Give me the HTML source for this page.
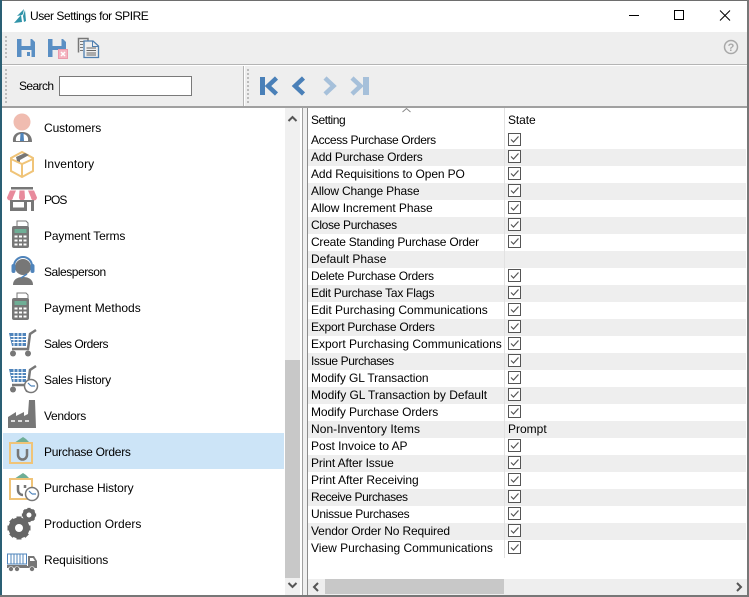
<!DOCTYPE html>
<html><head><meta charset="utf-8"><style>
html,body{margin:0;padding:0;background:#fff}
#w{position:relative;width:749px;height:597px;overflow:hidden;background:#fff;font:12px "Liberation Sans",sans-serif;color:#000}
#w div,#w svg{position:absolute}
.t{white-space:nowrap;line-height:17px}
.r{left:308px;width:438px;height:17px}
.g{background:#eee}
.grip{width:2px;background:repeating-linear-gradient(#bcbcbc 0 2px,transparent 2px 4px)}
</style></head><body><div id="w">
<div style="left:0;top:0;width:749px;height:1px;background:#6e6e6e"></div>
<div style="left:0;top:0;width:2px;height:597px;background:#2a5f74"></div>
<div style="left:747px;top:0;width:2px;height:597px;background:#777"></div>
<div style="left:0;top:595px;width:749px;height:2px;background:#777"></div>

<svg style="left:13px;top:7px" width="16" height="17" viewBox="0 0 16 17"><path d="M1 16L8 8 9 15ZM4 9L11 2 10 7 9 8ZM10 9L12 3 13 14 11 15Z" fill="#2f93a8"/></svg>
<div class="t" style="left:30px;top:8px;letter-spacing:-.45px">User Settings for SPIRE</div>
<svg style="left:625px;top:6px" width="120" height="20" viewBox="0 0 120 20" fill="none" stroke="#000"><path d="M4 9.500H14"/><rect x="49.500" y="4.500" width="9" height="9"/><path d="M95 4.500L105 14.500M105 4.500L95 14.500"/></svg>

<div style="left:2px;top:32px;width:745px;height:32px;background:#eee"></div>
<div style="left:2px;top:64px;width:745px;height:1px;background:#b4b4b4"></div>
<div style="left:2px;top:65px;width:745px;height:1px;background:#fff"></div>
<div style="left:2px;top:66px;width:745px;height:40px;background:#eee"></div>
<div style="left:2px;top:106px;width:745px;height:2px;background:#a0a0a0"></div>
<div class="grip" style="left:5px;top:36px;height:24px"></div>
<div class="grip" style="left:5px;top:69px;height:34px"></div>
<div style="left:243px;top:66px;width:1px;height:40px;background:#b4b4b4"></div>
<div style="left:244px;top:66px;width:1px;height:40px;background:#fff"></div>
<div class="grip" style="left:247px;top:69px;height:34px"></div>

<svg style="left:16px;top:38px" width="21" height="20" viewBox="0 0 21 20"><path d="M1 1H16L19 4V19H1Z" fill="#5a8fc4"/><rect x="5.500" y="1" width="9" height="7" fill="#eee"/><rect x="5.500" y="12" width="10" height="7" fill="#eee"/><rect x="11" y="14" width="3" height="4" fill="#5a8fc4"/></svg>
<svg style="left:47px;top:38px" width="22" height="22" viewBox="0 0 22 22"><path d="M1 1H16L19 4V19H1Z" fill="#5a8fc4"/><rect x="5.500" y="1" width="9" height="7" fill="#eee"/><rect x="5.500" y="12" width="6" height="7" fill="#eee"/><rect x="11.500" y="11.500" width="9" height="9" fill="#f4b4c0" stroke="#ec9aac"/><path d="M14 14L18 18M18 14L14 18" stroke="#fff" stroke-width="1.500"/></svg>
<svg style="left:77px;top:37px" width="23" height="22" viewBox="0 0 23 22" fill="none"><path d="M1.500 15.500V1.500H11V5" stroke="#777" stroke-width="1.500" fill="#eee"/><path d="M3 4.500H8M3 7.500H6M3 10.500H6M3 13.500H6" stroke="#777"/><path d="M7 4H16L21.500 9V20.500H7Z" fill="#eee" stroke="#4f7fb0" stroke-width="1.300"/><path d="M15.500 4V9.500H21" stroke="#4f7fb0"/><path d="M9.500 11H19M9.500 13.500H19M9.500 16H19M9.500 18H19" stroke="#666"/></svg>
<svg style="left:723px;top:39px" width="16" height="16" viewBox="0 0 16 16"><circle cx="8" cy="8" r="6.500" fill="none" stroke="#a8a8a8" stroke-width="1.500"/><text x="8" y="12" font-family="Liberation Sans" font-size="11" font-weight="bold" fill="#a8a8a8" text-anchor="middle">?</text></svg>

<div class="t" style="left:19px;top:78px;letter-spacing:-.6px">Search</div>
<div style="left:59px;top:76px;width:131px;height:18px;background:#fff;border:1px solid #7a7a7a"></div>

<svg style="left:258px;top:74px" width="115" height="24" viewBox="0 0 115 24"><path d="M2 3H7V21H2Z" fill="#4a80b8"/><path d="M18.500 4L10 12 18.500 20" fill="none" stroke="#4a80b8" stroke-width="4.500"/><path d="M45.500 4L37 12 45.500 20" fill="none" stroke="#4a80b8" stroke-width="4.500"/><path d="M67 4L75.500 12 67 20" fill="none" stroke="#a6c0da" stroke-width="4.500"/><path d="M94 4L102.500 12 94 20" fill="none" stroke="#a6c0da" stroke-width="4.500"/><path d="M105 3H111V21H105Z" fill="#a6c0da"/></svg>

<!-- left list -->
<div style="left:3px;top:433px;width:281px;height:36px;background:#cce4f7"></div>
<div class="t" style="left:44px;top:120px;letter-spacing:-.1px">Customers</div>
<div class="t" style="left:44px;top:156px;letter-spacing:.1px">Inventory</div>
<div class="t" style="left:44px;top:192px;letter-spacing:-1px">POS</div>
<div class="t" style="left:44px;top:228px;letter-spacing:-.15px">Payment Terms</div>
<div class="t" style="left:44px;top:264px;letter-spacing:-.45px">Salesperson</div>
<div class="t" style="left:44px;top:300px">Payment Methods</div>
<div class="t" style="left:44px;top:336px;letter-spacing:-.5px">Sales Orders</div>
<div class="t" style="left:44px;top:372px;letter-spacing:-.3px">Sales History</div>
<div class="t" style="left:44px;top:408px;letter-spacing:-.3px">Vendors</div>
<div class="t" style="left:44px;top:444px;letter-spacing:-.27px">Purchase Orders</div>
<div class="t" style="left:44px;top:480px;letter-spacing:-.12px">Purchase History</div>
<div class="t" style="left:44px;top:516px">Production Orders</div>
<div class="t" style="left:44px;top:552px;letter-spacing:-.1px">Requisitions</div>

<svg style="left:0;top:108px" width="40" height="480" viewBox="0 108 40 480">
<defs>
<g id="calc"><path d="M6 7V1H15L17 3V7Z" fill="#fff" stroke="#777"/><rect x="1" y="6" width="17" height="22" rx="2" fill="#777"/><rect x="3.500" y="9" width="12" height="4" fill="#6fae96"/><path d="M3.500 15.500h3v2h-3zM8 15.500h3v2H8zM12.500 15.500h3v2h-3zM3.500 19.500h3v2h-3zM8 19.500h3v2H8zM12.500 19.500h3v2h-3zM3.500 23.500h3v2h-3zM8 23.500h3v2H8zM12.500 23.500h3v2h-3z" fill="#fff"/></g>
<g id="cart"><path d="M1 4H18V17H4Z" fill="#4f84bb"/><path d="M2.500 7.500H18M3 10.500H18M4 13.500H18M6 4V17M10 4V17M14 4V17" stroke="#fff"/><path d="M4 20H20L22 5 28 1" fill="none" stroke="#777" stroke-width="2.500"/><circle cx="5" cy="24.500" r="3" fill="#777"/><circle cx="20" cy="24.500" r="3" fill="#777"/></g>
<g id="clock"><circle cx="0" cy="0" r="6.500" fill="#fff" stroke="#777" stroke-width="1.500"/><path d="M0 0L-3 -3M0 0L4 0" stroke="#4f84bb" stroke-width="1.200"/></g>
<g id="bag"><path d="M5 6L14 0 17 2 21 6Z" fill="#6fae96"/><path d="M1 6H23V26H1Z" fill="none" stroke="#f0c478" stroke-width="2"/></g>
<g id="gear"><circle r="7.500" fill="none" stroke="#666" stroke-width="6"/><path d="M-2.500 -11.500H2.500V11.500H-2.500ZM-11.500 -2.500H11.500V2.500H-11.500Z" fill="#666"/><path d="M-2.500 -11.500H2.500V11.500H-2.500ZM-11.500 -2.500H11.500V2.500H-11.500Z" fill="#666" transform="rotate(45)"/><circle r="4" fill="#fff"/></g>
</defs>
<!-- customers -->
<g transform="translate(12,113)"><circle cx="10" cy="9" r="8.500" fill="#f0bcb0"/><path d="M1 29C0 20 7 19 10 19S20 20 20 29Z" fill="#777"/><path d="M4 28C3 23 7 21 9 21V28ZM16 28C17 23 13 21 11 21V28Z" fill="#fff"/><path d="M8.500 20H11.500L12 28H8Z" fill="#4f84bb"/></g>
<!-- inventory -->
<g transform="translate(10,151)"><path d="M12 1L23 7V20L12 26 1 20V7Z" fill="#fff" stroke="#f0c478" stroke-width="2"/><path d="M1 8L12 13 23 8M12 13V26" fill="none" stroke="#f0c478" stroke-width="2"/><path d="M6 6L15 2 19 4 10 9V11L7 10Z" fill="#777"/></g>
<!-- POS -->
<g transform="translate(7,187)"><rect x="4" y="0" width="22" height="2.500" fill="#777"/><path d="M3 3.500H9L6 10.500A3 3 0 0 1 0 10.500ZM12.500 3.500H17.500L18 10.500A3 3 0 0 1 12 10.500ZM21 3.500H27L30 10.500A3 3 0 0 1 24 10.500Z" fill="#e88a9c"/><path d="M3 13H27V24H3Z" fill="#777"/><rect x="6" y="15" width="11" height="5.500" fill="#fff"/><rect x="20" y="15" width="4" height="9" fill="#fff"/></g>
<use href="#calc" transform="translate(11,220)"/>
<!-- salesperson -->
<g transform="translate(11,257)"><circle cx="12" cy="10" r="8" fill="#777"/><path d="M3 12V9A9 9 0 0 1 21 9V12" fill="none" stroke="#4f84bb" stroke-width="2"/><rect x="0.500" y="7" width="4" height="9" rx="2" fill="#4f84bb"/><rect x="19.500" y="7" width="4" height="9" rx="2" fill="#4f84bb"/><path d="M2 28C2 22 7 20 12 20S22 22 22 28Z" fill="#777"/><path d="M10 21L16 17" stroke="#4f84bb" stroke-width="1.500"/></g>
<use href="#calc" transform="translate(11,292)"/>
<use href="#cart" transform="translate(8,329)"/>
<use href="#cart" transform="translate(8,365)"/>
<use href="#clock" transform="translate(31,386)"/>
<!-- vendors -->
<path d="M8 428V417L16 412V416L24 412V416L28 414 29 400H35L36 428Z" fill="#777"/><path d="M11 421H15M18 421H22M25 421H29" stroke="#fff" stroke-width="1.500"/>
<!-- purchase orders -->
<use href="#bag" transform="translate(9,437)"/>
<path d="M18 449V455A4.500 4.500 0 0 0 27 455V449" fill="none" stroke="#777" stroke-width="2.500"/>
<!-- purchase history -->
<use href="#bag" transform="translate(9,473)"/>
<path d="M18 485V490A5 5 0 0 0 23 495M25 485V488" fill="none" stroke="#777" stroke-width="2.500"/>
<use href="#clock" transform="translate(32,494)"/>
<!-- production -->
<use href="#gear" transform="translate(19,528)"/>
<use href="#gear" transform="translate(29,515) scale(.62)"/>
<!-- requisitions -->
<g transform="translate(7,553)"><rect x=".5" y="1" width="19" height="10" fill="#fff" stroke="#4f84bb"/><path d="M4 1V11M7 1V11M10 1V11M13 1V11M16 1V11" stroke="#4f84bb"/><path d="M0 12H20V13H0Z" fill="#777"/><path d="M21 3H27L30 8V15H0V13H21Z" fill="#777"/><path d="M23 5H26L28 8H23Z" fill="#fff"/><circle cx="4" cy="16" r="2.500" fill="#777" stroke="#fff" stroke-width=".6"/><circle cx="10" cy="16" r="2.500" fill="#777" stroke="#fff" stroke-width=".6"/><circle cx="25" cy="16" r="2.500" fill="#777" stroke="#fff" stroke-width=".6"/></g>
</svg>

<!-- left scrollbar -->
<div style="left:285px;top:108px;width:15px;height:487px;background:#f0f0f0"></div>
<div style="left:285px;top:360px;width:15px;height:218px;background:#c8c8c8"></div>
<svg style="left:285px;top:110px" width="15" height="485" viewBox="0 0 15 485" fill="none" stroke="#555" stroke-width="2"><path d="M3.500 11L7.500 7 11.500 11M3.500 473L7.500 477 11.500 473"/></svg>

<!-- splitter -->
<div style="left:300px;top:108px;width:2px;height:487px;background:#fff"></div>
<div style="left:302px;top:108px;width:1px;height:487px;background:#a0a0a0"></div>
<div style="left:303px;top:108px;width:4px;height:487px;background:#f0f0f0"></div>
<div style="left:307px;top:108px;width:1px;height:487px;background:#8c8c8c"></div>

<!-- grid -->
<svg style="left:401px;top:107px" width="11" height="6" viewBox="0 0 11 6" fill="none" stroke="#888"><path d="M1.500 5L5.500 1.500 9.500 5"/></svg>
<div class="r g" style="top:149px"></div><div class="r g" style="top:183px"></div><div class="r g" style="top:217px"></div><div class="r g" style="top:251px"></div><div class="r g" style="top:285px"></div><div class="r g" style="top:319px"></div><div class="r g" style="top:353px"></div><div class="r g" style="top:387px"></div><div class="r g" style="top:421px"></div><div class="r g" style="top:455px"></div><div class="r g" style="top:489px"></div><div class="r g" style="top:523px"></div>
<div style="left:504px;top:108px;width:1px;height:450px;background:#e2e2e2"></div>
<div class="t" style="left:311px;top:112px;letter-spacing:-.45px">Setting</div>
<div class="t" style="left:508px;top:112px;letter-spacing:-.1px">State</div>
<div class="t" style="left:311px;top:132px;letter-spacing:-.36px">Access Purchase Orders</div>
<div class="t" style="left:311px;top:149px;letter-spacing:-.2px">Add Purchase Orders</div>
<div class="t" style="left:311px;top:166px;letter-spacing:-.11px">Add Requisitions to Open PO</div>
<div class="t" style="left:311px;top:183px;letter-spacing:-.17px">Allow Change Phase</div>
<div class="t" style="left:311px;top:200px;letter-spacing:-.05px">Allow Increment Phase</div>
<div class="t" style="left:311px;top:217px;letter-spacing:-.33px">Close Purchases</div>
<div class="t" style="left:311px;top:234px;letter-spacing:-.23px">Create Standing Purchase Order</div>
<div class="t" style="left:311px;top:251px">Default Phase</div>
<div class="t" style="left:311px;top:268px;letter-spacing:-.27px">Delete Purchase Orders</div>
<div class="t" style="left:311px;top:285px;letter-spacing:-.26px">Edit Purchase Tax Flags</div>
<div class="t" style="left:311px;top:302px">Edit Purchasing Communications</div>
<div class="t" style="left:311px;top:319px;letter-spacing:-.23px">Export Purchase Orders</div>
<div class="t" style="left:311px;top:336px">Export Purchasing Communications</div>
<div class="t" style="left:311px;top:353px;letter-spacing:-.4px">Issue Purchases</div>
<div class="t" style="left:311px;top:370px;letter-spacing:-.1px">Modify GL Transaction</div>
<div class="t" style="left:311px;top:387px;letter-spacing:-.03px">Modify GL Transaction by Default</div>
<div class="t" style="left:311px;top:404px;letter-spacing:-.1px">Modify Purchase Orders</div>
<div class="t" style="left:311px;top:421px;letter-spacing:.05px">Non-Inventory Items</div>
<div class="t" style="left:508px;top:421px">Prompt</div>
<div class="t" style="left:311px;top:438px;letter-spacing:-.05px">Post Invoice to AP</div>
<div class="t" style="left:311px;top:455px;letter-spacing:-.12px">Print After Issue</div>
<div class="t" style="left:311px;top:472px;letter-spacing:-.05px">Print After Receiving</div>
<div class="t" style="left:311px;top:489px;letter-spacing:-.4px">Receive Purchases</div>
<div class="t" style="left:311px;top:506px;letter-spacing:-.3px">Unissue Purchases</div>
<div class="t" style="left:311px;top:523px;letter-spacing:-.16px">Vendor Order No Required</div>
<div class="t" style="left:311px;top:540px">View Purchasing Communications</div>

<svg style="left:508px;top:132px" width="14" height="425" viewBox="0 0 14 425">
<defs><g id="c"><rect x=".5" y="1.500" width="12" height="12" fill="#fff" stroke="#555"/><path d="M3 7.500L5.500 10 10.500 4.500" fill="none" stroke="#555" stroke-width="1.200"/></g></defs>
<use href="#c" y="0"/><use href="#c" y="17"/><use href="#c" y="34"/><use href="#c" y="51"/><use href="#c" y="68"/><use href="#c" y="85"/><use href="#c" y="102"/><use href="#c" y="136"/><use href="#c" y="153"/><use href="#c" y="170"/><use href="#c" y="187"/><use href="#c" y="204"/><use href="#c" y="221"/><use href="#c" y="238"/><use href="#c" y="255"/><use href="#c" y="272"/><use href="#c" y="306"/><use href="#c" y="323"/><use href="#c" y="340"/><use href="#c" y="357"/><use href="#c" y="374"/><use href="#c" y="391"/><use href="#c" y="408"/>
</svg>

<!-- h scrollbar -->
<div style="left:308px;top:579px;width:439px;height:16px;background:#eee"></div>
<div style="left:325px;top:579px;width:179px;height:15px;background:#c8c8c8"></div>
<svg style="left:308px;top:579px" width="439" height="16" viewBox="0 0 439 16" fill="none" stroke="#555" stroke-width="2"><path d="M10 4L6 8 10 12M429 4L433 8 429 12"/></svg>
</div></body></html>
